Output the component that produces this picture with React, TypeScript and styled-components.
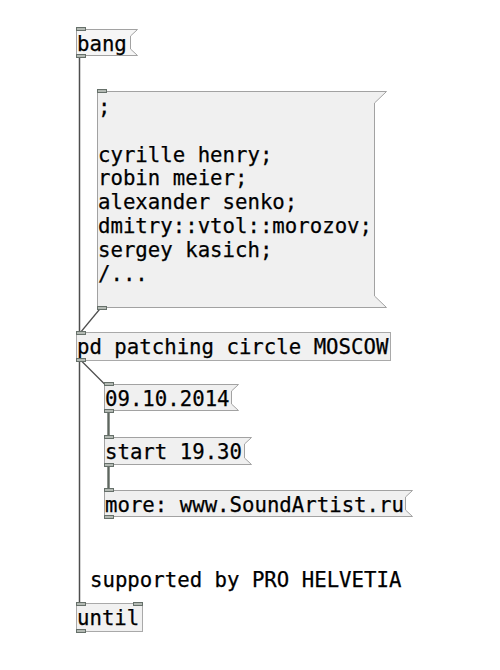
import React from "react";
import styled, { createGlobalStyle } from "styled-components";

const Global = createGlobalStyle`
  html, body { margin: 0; padding: 0; background: #ffffff; }
  body { width: 500px; height: 670px; overflow: hidden; }
`;

const Canvas = styled.div`
  position: relative;
  width: 500px;
  height: 670px;
  background: #ffffff;
  font-family: "DejaVu Sans Mono", "Liberation Mono", monospace;
  font-size: 20.7px;
  line-height: 23.8px;
  color: #000;
  overflow: hidden;
  -webkit-text-stroke: 0.25px #000;
`;

const Cords = styled.svg`
  position: absolute;
  left: 0;
  top: 0;
  width: 500px;
  height: 670px;
  z-index: 0;
  pointer-events: none;
`;

type Geo = { $x: number; $y: number; $w: number; $h: number };

const ObjectBox = styled.div<Geo>`
  position: absolute;
  left: ${(p) => p.$x}px;
  top: ${(p) => p.$y}px;
  width: ${(p) => p.$w}px;
  height: ${(p) => p.$h}px;
  box-sizing: border-box;
  border: 1px solid #a9a9a9;
  background: #f1f1f1;
  padding: 3px 0 0 0;
  white-space: pre;
  z-index: 1;
`;

const MessageBox = styled.div<Geo>`
  position: absolute;
  left: ${(p) => p.$x}px;
  top: ${(p) => p.$y}px;
  width: ${(p) => p.$w}px;
  height: ${(p) => p.$h}px;
  box-sizing: border-box;
  z-index: 1;
`;

const Outline = styled.svg`
  position: absolute;
  left: 0;
  top: 0;
  overflow: visible;
  z-index: 0;
`;

const MsgText = styled.div<{ $pad: number }>`
  position: relative;
  z-index: 1;
  padding: ${(p) => p.$pad}px 0 0 1px;
  white-space: pre;
`;

const Comment = styled.div<{ $x: number; $y: number }>`
  position: absolute;
  left: ${(p) => p.$x}px;
  top: ${(p) => p.$y}px;
  white-space: pre;
  z-index: 1;
`;

const Port = styled.div<{ $side: "left" | "right"; $edge: "top" | "bottom"; $inset?: number }>`
  position: absolute;
  ${(p) => p.$side}: ${(p) => p.$inset ?? -1}px;
  ${(p) => p.$edge}: -2px;
  width: 10px;
  height: 4px;
  box-sizing: border-box;
  background: #b3b9b3;
  border: 1px solid #66706a;
  z-index: 2;
`;

type MsgProps = {
  x: number;
  y: number;
  w: number;
  h: number;
  corner: number;
  pad?: number;
  fill?: string;
  children: React.ReactNode;
};

function Message({ x, y, w, h, corner, pad = 4, fill = "#f0f0f0", children }: MsgProps) {
  const c = corner;
  const pts = [
    [0.5, 0.5],
    [w + c - 0.5, 0.5],
    [w - 0.5, c],
    [w - 0.5, h - c],
    [w + c - 0.5, h - 0.5],
    [0.5, h - 0.5],
  ]
    .map((p) => p.join(","))
    .join(" ");
  return (
    <MessageBox $x={x} $y={y} $w={w} $h={h}>
      <Outline width={w + c} height={h}>
        <polygon points={pts} fill={fill} stroke="#a2a2a2" strokeWidth="1" />
      </Outline>
      <MsgText $pad={pad}>{children}</MsgText>
      <Port $side="left" $edge="top" $inset={0} />
      <Port $side="left" $edge="bottom" $inset={0} />
    </MessageBox>
  );
}

export default function App() {
  return (
    <Canvas>
      <Global />
      <Cords viewBox="0 0 500 670">
        <g stroke="#4e4e4e" fill="none">
          <line x1="79.5" y1="56" x2="79.5" y2="333" strokeWidth="1.5" />
          <line x1="79.5" y1="360" x2="79.5" y2="604" strokeWidth="1.5" />
          <line x1="101.5" y1="307" x2="80" y2="333" strokeWidth="1.2" />
          <line x1="80.5" y1="360" x2="106" y2="385.5" strokeWidth="1.2" />
        </g>
        <g stroke="#5e665f" fill="none" strokeWidth="2.4">
          <line x1="108.5" y1="410" x2="108.5" y2="438" />
          <line x1="108.5" y1="464" x2="108.5" y2="491" />
        </g>
      </Cords>

      <Message x={76} y={29} w={55} h={27} corner={7} fill="#f6f6f6">
        bang
      </Message>

      <Message x={97} y={91} w={278} h={217} corner={12} pad={5}>
        {";\n\ncyrille henry;\nrobin meier;\nalexander senko;\ndmitry::vtol::morozov;\nsergey kasich;\n/..."}
      </Message>

      <ObjectBox $x={76} $y={332} $w={315} $h={29}>
        pd patching circle MOSCOW
        <Port $side="left" $edge="top" />
        <Port $side="left" $edge="bottom" />
      </ObjectBox>

      <Message x={104} y={384} w={128} h={27} corner={7}>
        09.10.2014
      </Message>

      <Message x={104} y={437} w={141} h={28} corner={7}>
        start 19.30
      </Message>

      <Message x={104} y={490} w={302} h={27} corner={7}>
        more: www.SoundArtist.ru
      </Message>

      <Comment $x={90} $y={569}>supported by PRO HELVETIA</Comment>

      <ObjectBox $x={76} $y={603} $w={67} $h={29}>
        until
        <Port $side="left" $edge="top" />
        <Port $side="right" $edge="top" />
        <Port $side="left" $edge="bottom" />
      </ObjectBox>
    </Canvas>
  );
}
